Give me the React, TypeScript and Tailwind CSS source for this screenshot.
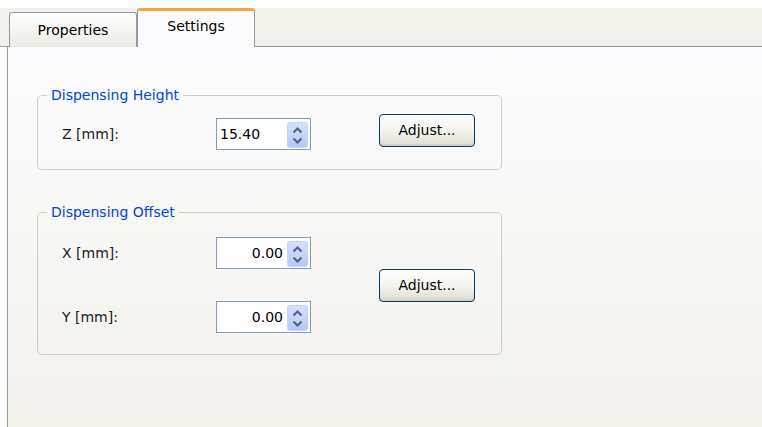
import type { ReactNode } from "react";

const FONT = { fontFamily: '"DejaVu Sans", Tahoma, sans-serif' };

// Spin arrows drawn as small chevrons inside a light blue rounded box
function SpinButtons() {
  return (
    <div className="absolute right-[2px] top-[3px] w-[21px] h-[26px] rounded-[3px] bg-gradient-to-b from-[#d6e1fc] to-[#b7c8f3] border border-[#c3d2f8] flex flex-col items-center justify-center gap-[3px]">
      <svg width="11" height="7" viewBox="0 0 11 7">
        <path d="M1.5 5.5 L5.5 1.5 L9.5 5.5" fill="none" stroke="#4d6185" strokeWidth="2" />
      </svg>
      <svg width="11" height="7" viewBox="0 0 11 7">
        <path d="M1.5 1.5 L5.5 5.5 L9.5 1.5" fill="none" stroke="#4d6185" strokeWidth="2" />
      </svg>
    </div>
  );
}

function SpinBox({ value, align }: { value: string; align: "left" | "right" }) {
  return (
    <div className="relative w-[95px] h-[32px] border border-[#7f9db9] bg-white">
      <div
        className={
          align === "left"
            ? "absolute left-[3px] top-0 h-full flex items-center text-[14px] text-black"
            : "absolute right-[27px] top-0 h-full flex items-center text-[14px] text-black"
        }
      >
        {value}
      </div>
      <SpinButtons />
    </div>
  );
}

function AdjustButton() {
  return (
    <button className="w-[96px] h-[33px] rounded-[4px] border border-[#003c74] bg-gradient-to-b from-[#ffffff] via-[#f5f4ef] to-[#dedbd0] text-[14px] text-black shadow-[inset_0_-2px_0_#d6d0c2]">
      Adjust...
    </button>
  );
}

function GroupBox({ title, children }: { title: string; children: ReactNode }) {
  return (
    <fieldset className="w-[465px] border border-[#d0d0bf] rounded-[5px] pl-[24px] pr-[26px]">
      <legend className="-ml-[15px] px-[4px] text-[14px] text-[#0046d5] leading-[16px]">{title}</legend>
      {children}
    </fieldset>
  );
}

export default function App() {
  return (
    <div className="w-[762px] h-[427px] bg-white flex flex-col overflow-hidden" style={FONT}>
      <div className="h-[8px] bg-white" />

      {/* tab strip */}
      <div className="h-[39px] bg-[#f1f0ea] border-b border-[#919b9c] flex items-end pl-[9px]">
        <div className="w-[128px] h-[35px] -mb-px rounded-t-[3px] border border-b-0 border-[#919b9c] bg-gradient-to-b from-white to-[#ecebe4] flex items-center justify-center text-[14px] text-black">
          Properties
        </div>
        <div className="w-[118px] h-[39px] -mb-px rounded-t-[3px] border-x border-[#919b9c] border-t-[3px] border-t-[#f2a93b] bg-[#fcfcfe] flex items-center justify-center pb-[5px] text-[14px] text-black">
          Settings
        </div>
      </div>

      {/* panel body */}
      <div className="flex-1 ml-[7px] border-l border-[#919b9c] bg-gradient-to-b from-[#fcfcfe] to-[#f3f2ed] pl-[29px] pt-[40px] flex flex-col gap-[34px]">
        <GroupBox title="Dispensing Height">
          <div className="flex items-center pt-[15px] pb-[19px]">
            <div className="w-[154px] text-[14px] text-[#1a1a1a]">Z [mm]:</div>
            <SpinBox value="15.40" align="left" />
            <div className="ml-[68px] -mt-[7px]">
              <AdjustButton />
            </div>
          </div>
        </GroupBox>

        <GroupBox title="Dispensing Offset">
          <div className="flex items-center pt-[17px] pb-[21px]">
            <div className="flex flex-col gap-[32px]">
              <div className="flex items-center">
                <div className="w-[154px] text-[14px] text-[#1a1a1a]">X [mm]:</div>
                <SpinBox value="0.00" align="right" />
              </div>
              <div className="flex items-center">
                <div className="w-[154px] text-[14px] text-[#1a1a1a]">Y [mm]:</div>
                <SpinBox value="0.00" align="right" />
              </div>
            </div>
            <div className="ml-[68px]">
              <AdjustButton />
            </div>
          </div>
        </GroupBox>
      </div>
    </div>
  );
}
